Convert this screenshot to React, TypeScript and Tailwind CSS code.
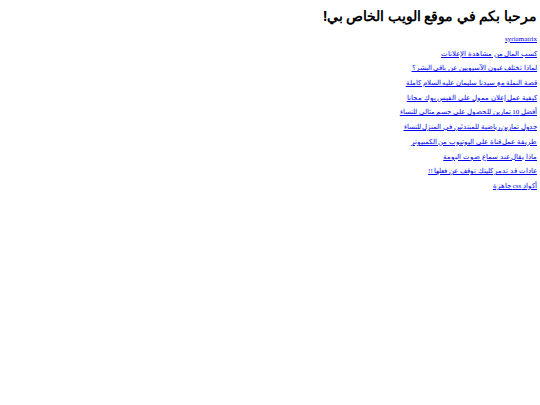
import React from "react";

const links = [
  "كسب المال من مشاهدة الإعلانات",
  "لماذا تختلف عيون الآسيويين عن باقي البشر؟",
  "قصة النملة مع سيدنا سليمان عليه السلام كاملة",
  "كيفية عمل إعلان ممول على الفيس بوك مجانا",
  "أفضل 10 تمارين للحصول على جسم مثالي للنساء",
  "جدول تمارين رياضية للمبتدئين في المنزل للنساء",
  "طريقة عمل قناة على اليوتيوب من الكمبيوتر",
  "ماذا يقال عند سماع صوت البومة",
  "عادات قد تدمر كليتك توقف عن فعلها !!",
  "أكواد css جاهزة",
];

export default function App() {
  return (
    <div
      dir="rtl"
      className="w-[540px] h-[405px] bg-white pr-[3px] pt-[5px]"
      style={{ fontFamily: '"Liberation Serif", "Noto Sans", serif' }}
    >
      <h1
        className="text-[13.5px] font-bold leading-[22px] text-black mb-[8px]"
        style={{ fontFamily: '"Noto Sans", sans-serif' }}
      >
        مرحبا بكم في موقع الويب الخاص بي!
      </h1>
      <div className="flex flex-col items-start gap-[5.7px] text-[7px] leading-[9px]">
        <a href="#" className="text-[#0000ee] underline">syriamatrix</a>
        {links.map((t) => (
          <a key={t} href="#" className="text-[#0000ee] underline">
            {t}
          </a>
        ))}
      </div>
    </div>
  );
}
